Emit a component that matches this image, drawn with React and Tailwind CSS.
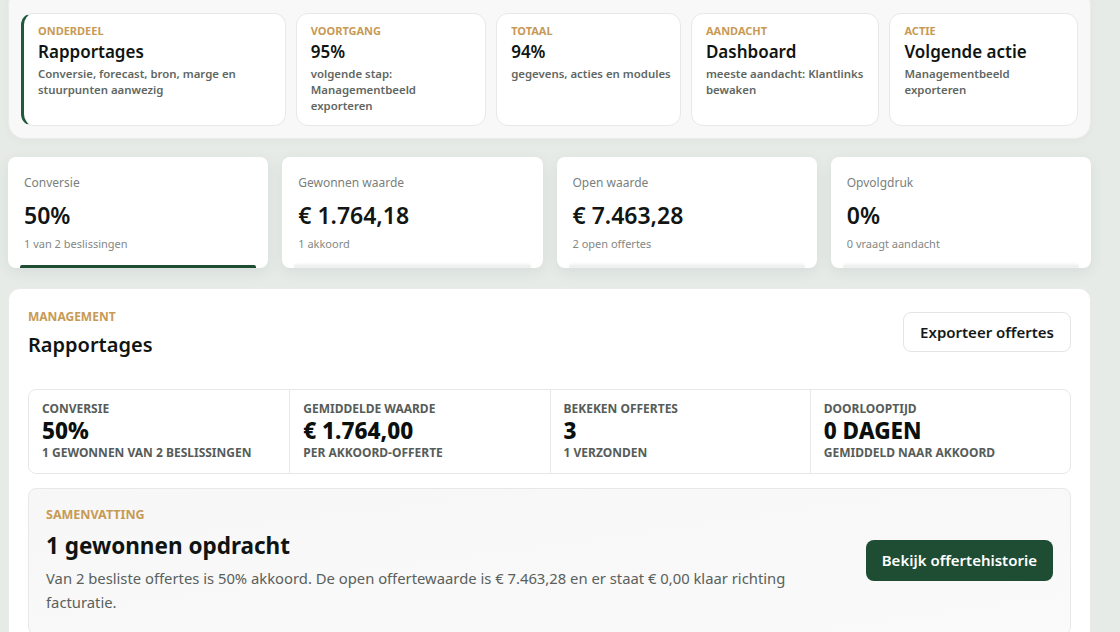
import React from "react";

const topCards = [
  { label: "Onderdeel", title: "Rapportages", text: "Conversie, forecast, bron, marge en stuurpunten aanwezig", accent: true },
  { label: "Voortgang", title: "95%", text: "volgende stap: Managementbeeld exporteren" },
  { label: "Totaal", title: "94%", text: "gegevens, acties en modules" },
  { label: "Aandacht", title: "Dashboard", text: "meeste aandacht: Klantlinks bewaken" },
  { label: "Actie", title: "Volgende actie", text: "Managementbeeld exporteren" },
];

const kpis = [
  { label: "Conversie", value: "50%", sub: "1 van 2 beslissingen", active: true },
  { label: "Gewonnen waarde", value: "€ 1.764,18", sub: "1 akkoord" },
  { label: "Open waarde", value: "€ 7.463,28", sub: "2 open offertes" },
  { label: "Opvolgdruk", value: "0%", sub: "0 vraagt aandacht" },
];

const stats = [
  { label: "Conversie", value: "50%", sub: "1 gewonnen van 2 beslissingen" },
  { label: "Gemiddelde waarde", value: "€ 1.764,00", sub: "per akkoord-offerte" },
  { label: "Bekeken offertes", value: "3", sub: "1 verzonden" },
  { label: "Doorlooptijd", value: "0 dagen", sub: "gemiddeld naar akkoord" },
];

const TopCard = ({ label, title, text, accent }) => (
  <div
    className={`h-[113px] rounded-[12px] border border-[#e6e9e7] bg-white pt-[10px] pr-[4px] ${
      accent ? "border-l-[3px] border-l-[#1f5a3a] pl-[14px]" : "pl-[14px]"
    }`}
  >
    <div className="text-[11px] font-bold uppercase leading-[14px] text-[#c79a55]">{label}</div>
    <div className="mt-[2px] text-[17px] font-semibold leading-[24px] text-[#101513]">{title}</div>
    <p className={`mt-[2px] text-[11.4px] font-semibold leading-[16px] text-[#5f6763] ${accent ? "" : "max-w-[164px]"}`}>
      {text}
    </p>
  </div>
);

const KpiCard = ({ label, value, sub, active }) => (
  <div className="relative h-[111px] overflow-hidden rounded-[8px] bg-white px-4 pt-[18px] shadow-[0_4px_14px_rgba(40,60,50,0.08)]">
    <div className="text-[12px] leading-[16px] text-[#7a7f7c]">{label}</div>
    <div className="mt-[10px] text-[23px] font-semibold leading-[28px] text-[#111513]">{value}</div>
    <div className="mt-[8px] text-[11px] leading-[14px] text-[#838885]">{sub}</div>
    <div
      className={`absolute bottom-0 left-[12px] right-[12px] h-[3px] rounded-t-[2px] ${
        active ? "bg-[#1f4d34]" : "bg-[#eef1ef] shadow-[0_-1px_3px_rgba(0,0,0,0.06)]"
      }`}
    />
  </div>
);

export default function App() {
  return (
    <div
      className="min-h-[632px] w-full overflow-hidden bg-[#e6ebe8] pl-[8px] pr-[29px]"
      style={{ fontFamily: '"Noto Sans", "Open Sans", Arial, sans-serif' }}
    >
      {/* bovenste overzicht */}
      <div className="-mt-[12px] rounded-[16px] border border-[#e9ecea] bg-[#f7f8f7] pt-[24px] pb-[12px] pl-[12px] pr-[12px] shadow-[0_2px_8px_rgba(0,0,0,0.03)]">
        <div className="grid grid-cols-[1.39fr_1fr_0.97fr_0.99fr_0.99fr] gap-[10px]">
          {topCards.map((c) => (
            <TopCard key={c.label} {...c} />
          ))}
        </div>
      </div>

      <div className="mt-[18px] grid grid-cols-4 gap-[14px]">
        {kpis.map((k) => (
          <KpiCard key={k.label} {...k} />
        ))}
      </div>

      {/* management */}
      <div className="mt-[20px] rounded-[12px] border border-[#e8ebe9] bg-white pl-[19px] pr-[19px] pt-[20px] pb-[20px]">
        <div className="flex items-start justify-between">
          <div>
            <div className="mt-[1px] text-[12px] font-bold uppercase leading-[14px] text-[#c79a55]">Management</div>
            <h2 className="mt-[8px] text-[20px] font-semibold leading-[26px] text-[#101513]">Rapportages</h2>
          </div>
          <button className="mt-[3px] h-[40px] rounded-[8px] border border-[#e2e6e3] bg-white px-[16px] text-[15px] font-semibold text-[#151917]">
            Exporteer offertes
          </button>
        </div>

        <div className="mt-[31px] grid grid-cols-4 overflow-hidden rounded-[8px] border border-[#e6e9e7]">
          {stats.map((s, i) => (
            <div
              key={s.label}
              className={`h-[83px] px-[13px] pt-[11px] ${i > 0 ? "border-l border-[#e6e9e7]" : ""}`}
            >
              <div className="text-[12px] font-bold uppercase leading-[16px] text-[#565c59]">{s.label}</div>
              <div className="text-[22.5px] font-extrabold uppercase leading-[28px] text-[#0b0f0d]">{s.value}</div>
              <div className="text-[12px] font-bold uppercase leading-[16px] text-[#565c59]">{s.sub}</div>
            </div>
          ))}
        </div>

        <div className="mt-[14px] flex items-center justify-between rounded-[8px] border border-[#e6e9e7] bg-gradient-to-br from-[#f6f7f6] to-[#f9faf9] pl-[17px] pr-[17px] pt-[18px] pb-[20px]">
          <div className="max-w-[760px]">
            <div className="text-[12.5px] font-bold uppercase leading-[15px] text-[#c79a55]">Samenvatting</div>
            <h3 className="mt-[10px] text-[22.5px] font-bold leading-[28px] text-[#0f1412]">1 gewonnen opdracht</h3>
            <p className="mt-[6px] text-[14.8px] leading-[24px] text-[#5a605d]">
              Van 2 besliste offertes is 50% akkoord. De open offertewaarde is € 7.463,28 en er staat € 0,00 klaar richting
              facturatie.
            </p>
          </div>
          <button className="h-[41px] rounded-[8px] bg-[#1e4d33] px-[16px] text-[15px] font-semibold text-white">
            Bekijk offertehistorie
          </button>
        </div>
      </div>
    </div>
  );
}
